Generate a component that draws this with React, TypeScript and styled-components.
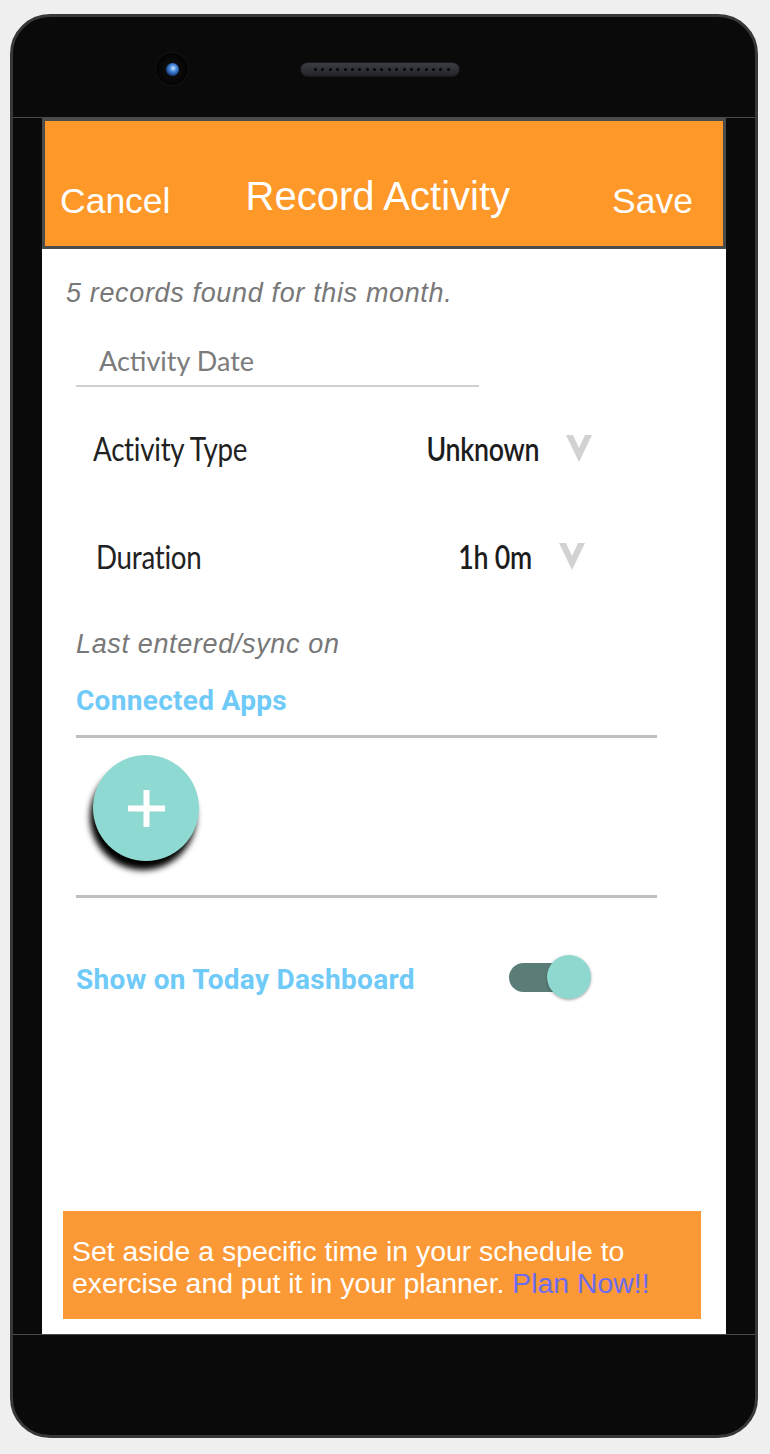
import React from 'react'
import styled, { createGlobalStyle } from 'styled-components'

const GlobalStyle = createGlobalStyle`
  html, body {
    margin: 0;
    padding: 0;
    background: #efefef;
  }
  body {
    font-family: 'Liberation Sans', Arial, sans-serif;
  }
`

const Page = styled.div`
  padding: 14px 0 16px 10px;
`

const Phone = styled.div`
  width: 748px;
  height: 1424px;
  box-sizing: border-box;
  background: #0a0a0a;
  border: 3px solid #383838;
  border-radius: 40px;
  display: flex;
  flex-direction: column;
  overflow: hidden;
`

const TopBezel = styled.div`
  height: 100px;
  box-sizing: border-box;
  padding: 4px 0 0 143px;
  display: flex;
  align-items: center;
`

const Camera = styled.div`
  width: 32px;
  height: 32px;
  border-radius: 50%;
  background: radial-gradient(circle, #141414 0%, #030303 70%);
  box-shadow: 0 0 0 1px #151515;
  display: flex;
  align-items: center;
  justify-content: center;
`

const Lens = styled.div`
  width: 13px;
  height: 13px;
  border-radius: 50%;
  background: radial-gradient(circle at 55% 40%, #cfe6ff 0%, #4f8ee0 30%, #1f4f9c 60%, #0a1a36 100%);
`

const Speaker = styled.div`
  width: 160px;
  height: 15px;
  margin-left: 112px;
  box-sizing: border-box;
  border-radius: 8px;
  background: linear-gradient(#3c3d42, #23242a);
  border: 1px solid #17181c;
  display: flex;
  align-items: center;
  justify-content: space-between;
  padding: 0 9px 0 13px;
`

const Dot = styled.span`
  width: 3px;
  height: 3px;
  border-radius: 50%;
  background: #060606;
`

const Middle = styled.div`
  border-top: 1px solid #4a4a4a;
  border-bottom: 1px solid #4a4a4a;
  padding: 0 29px;
`

const Screen = styled.div`
  height: 1216px;
  background: #fff;
  display: flex;
  flex-direction: column;
  padding-bottom: 15px;
  box-sizing: border-box;
`

const Header = styled.div`
  height: 131px;
  box-sizing: border-box;
  background: #fe9828;
  border: 3px solid #4b4b4b;
  display: flex;
  align-items: flex-end;
  padding: 0 30px 25px 15px;
  color: #fff;
`

const HeaderButton = styled.span<{ $right?: boolean }>`
  font-size: 35.5px;
  line-height: 40px;
  margin-left: ${({ $right }) => ($right ? 'auto' : '0')};
`

const Title = styled.span`
  font-size: 40px;
  line-height: 44px;
  margin: 0 0 3px 75px;
`

const Body = styled.div`
  flex: 1;
  display: flex;
  flex-direction: column;
  padding-left: 24px;
`

const Note = styled.div<{ $top: number; $indent?: number }>`
  margin-top: ${({ $top }) => $top}px;
  margin-left: ${({ $indent }) => $indent || 0}px;
  font-size: 27px;
  line-height: 32px;
  font-style: italic;
  letter-spacing: 0.65px;
  color: #787878;
`

const DateField = styled.div`
  margin: 36px 0 0 10px;
  width: 403px;
  box-sizing: border-box;
  padding: 0 0 8px 23px;
  border-bottom: 2px solid #cfcfcf;
  font-family: Lato, 'Open Sans', sans-serif;
  font-size: 27px;
  line-height: 32px;
  color: #7b7b7b;
`

const Row = styled.div<{ $top: number; $left: number; $right: number }>`
  margin-top: ${({ $top }) => $top}px;
  margin-left: ${({ $left }) => $left - 66}px;
  width: ${({ $left, $right }) => $right - $left}px;
  display: flex;
  align-items: center;
  font-family: Lato, 'Open Sans', sans-serif;
  font-size: 33px;
  line-height: 38px;
  letter-spacing: -0.3px;
`

const Label = styled.span`
  flex: 1;
  color: #222;
  transform: scaleX(0.84);
  transform-origin: left center;
`

const Value = styled.span`
  color: #1c1c1c;
  font-weight: 600;
  transform: scaleX(0.81);
  transform-origin: right center;
`

const ChevronIcon = styled.svg`
  margin-left: 27px;
  flex: none;
`

const Chevron = () => (
  <ChevronIcon width="26" height="28" viewBox="0 0 26 28">
    <polygon points="0,1 7,1 13,14 19,1 26,1 13,28" fill="#d2d2d2" />
  </ChevronIcon>
)

const LinkTitle = styled.div<{ $top: number }>`
  margin: ${({ $top }) => $top}px 0 0 10px;
  font-family: Roboto, 'Liberation Sans', sans-serif;
  font-weight: 700;
  font-size: 28px;
  line-height: 32px;
  letter-spacing: 0.3px;
  color: #6fcaf8;
`

const Divider = styled.div<{ $top: number }>`
  margin: ${({ $top }) => $top}px 0 0 10px;
  width: 581px;
  height: 3px;
  background: #bfbfbf;
`

const Fab = styled.button`
  margin: 17px 0 0 27px;
  width: 106px;
  height: 106px;
  border: none;
  padding: 0;
  border-radius: 50%;
  background: #8ed9d1;
  box-shadow: -3px 9px 6px rgba(0, 0, 0, 1);
  display: flex;
  align-items: center;
  justify-content: center;
`

const ToggleRow = styled.div`
  margin: 66px 0 0 10px;
  height: 32px;
  display: flex;
  align-items: center;
`

const Toggle = styled.div`
  position: relative;
  margin: 0 0 7px 94px;
  width: 82px;
  height: 44px;
`

const Track = styled.div`
  position: absolute;
  left: 0;
  top: 8px;
  width: 66px;
  height: 29px;
  border-radius: 15px;
  background: #5a7e77;
`

const Thumb = styled.div`
  position: absolute;
  right: 0;
  top: 0;
  width: 44px;
  height: 44px;
  border-radius: 50%;
  background: #8fd8d0;
  box-shadow: 0 1px 3px rgba(0, 0, 0, 0.35);
`

const Banner = styled.div`
  margin: auto 25px 0 -3px;
  background: #fb9937;
  padding: 24px 9px 20px 9px;
  font-size: 28.4px;
  line-height: 32px;
  color: #fff;
`

const PlanLink = styled.span`
  color: #6b6cf0;
`

const App: React.FC = () => {
  return (
    <Page>
      <GlobalStyle />
      <Phone>
        <TopBezel>
          <Camera>
            <Lens />
          </Camera>
          <Speaker>
            {Array.from({ length: 19 }).map((_, i) => (
              <Dot key={i} />
            ))}
          </Speaker>
        </TopBezel>
        <Middle>
          <Screen>
            <Header>
              <HeaderButton>Cancel</HeaderButton>
              <Title>Record Activity</Title>
              <HeaderButton $right>Save</HeaderButton>
            </Header>
            <Body>
              <Note $top={28}>5 records found for this month.</Note>
              <DateField>Activity Date</DateField>
              <Row $top={42} $left={93} $right={592}>
                <Label>Activity Type</Label>
                <Value>Unknown</Value>
                <Chevron />
              </Row>
              <Row $top={70} $left={96} $right={585}>
                <Label>Duration</Label>
                <Value>1h 0m</Value>
                <Chevron />
              </Row>
              <Note $top={53} $indent={10}>Last entered/sync on</Note>
              <LinkTitle $top={25}>Connected Apps</LinkTitle>
              <Divider $top={18} />
              <Fab aria-label="Add app">
                <svg width="37" height="37" viewBox="0 0 37 37">
                  <rect x="15.5" y="0" width="6" height="37" fill="#fff" />
                  <rect x="0" y="15.5" width="37" height="6" fill="#fff" />
                </svg>
              </Fab>
              <Divider $top={34} />
              <ToggleRow>
                <LinkTitle $top={0} style={{ marginLeft: 0 }}>Show on Today Dashboard</LinkTitle>
                <Toggle>
                  <Track />
                  <Thumb />
                </Toggle>
              </ToggleRow>
              <Banner>
                Set aside a specific time in your schedule to exercise and put it in your planner.{' '}
                <PlanLink>Plan Now!!</PlanLink>
              </Banner>
            </Body>
          </Screen>
        </Middle>
      </Phone>
    </Page>
  )
}

export default App
